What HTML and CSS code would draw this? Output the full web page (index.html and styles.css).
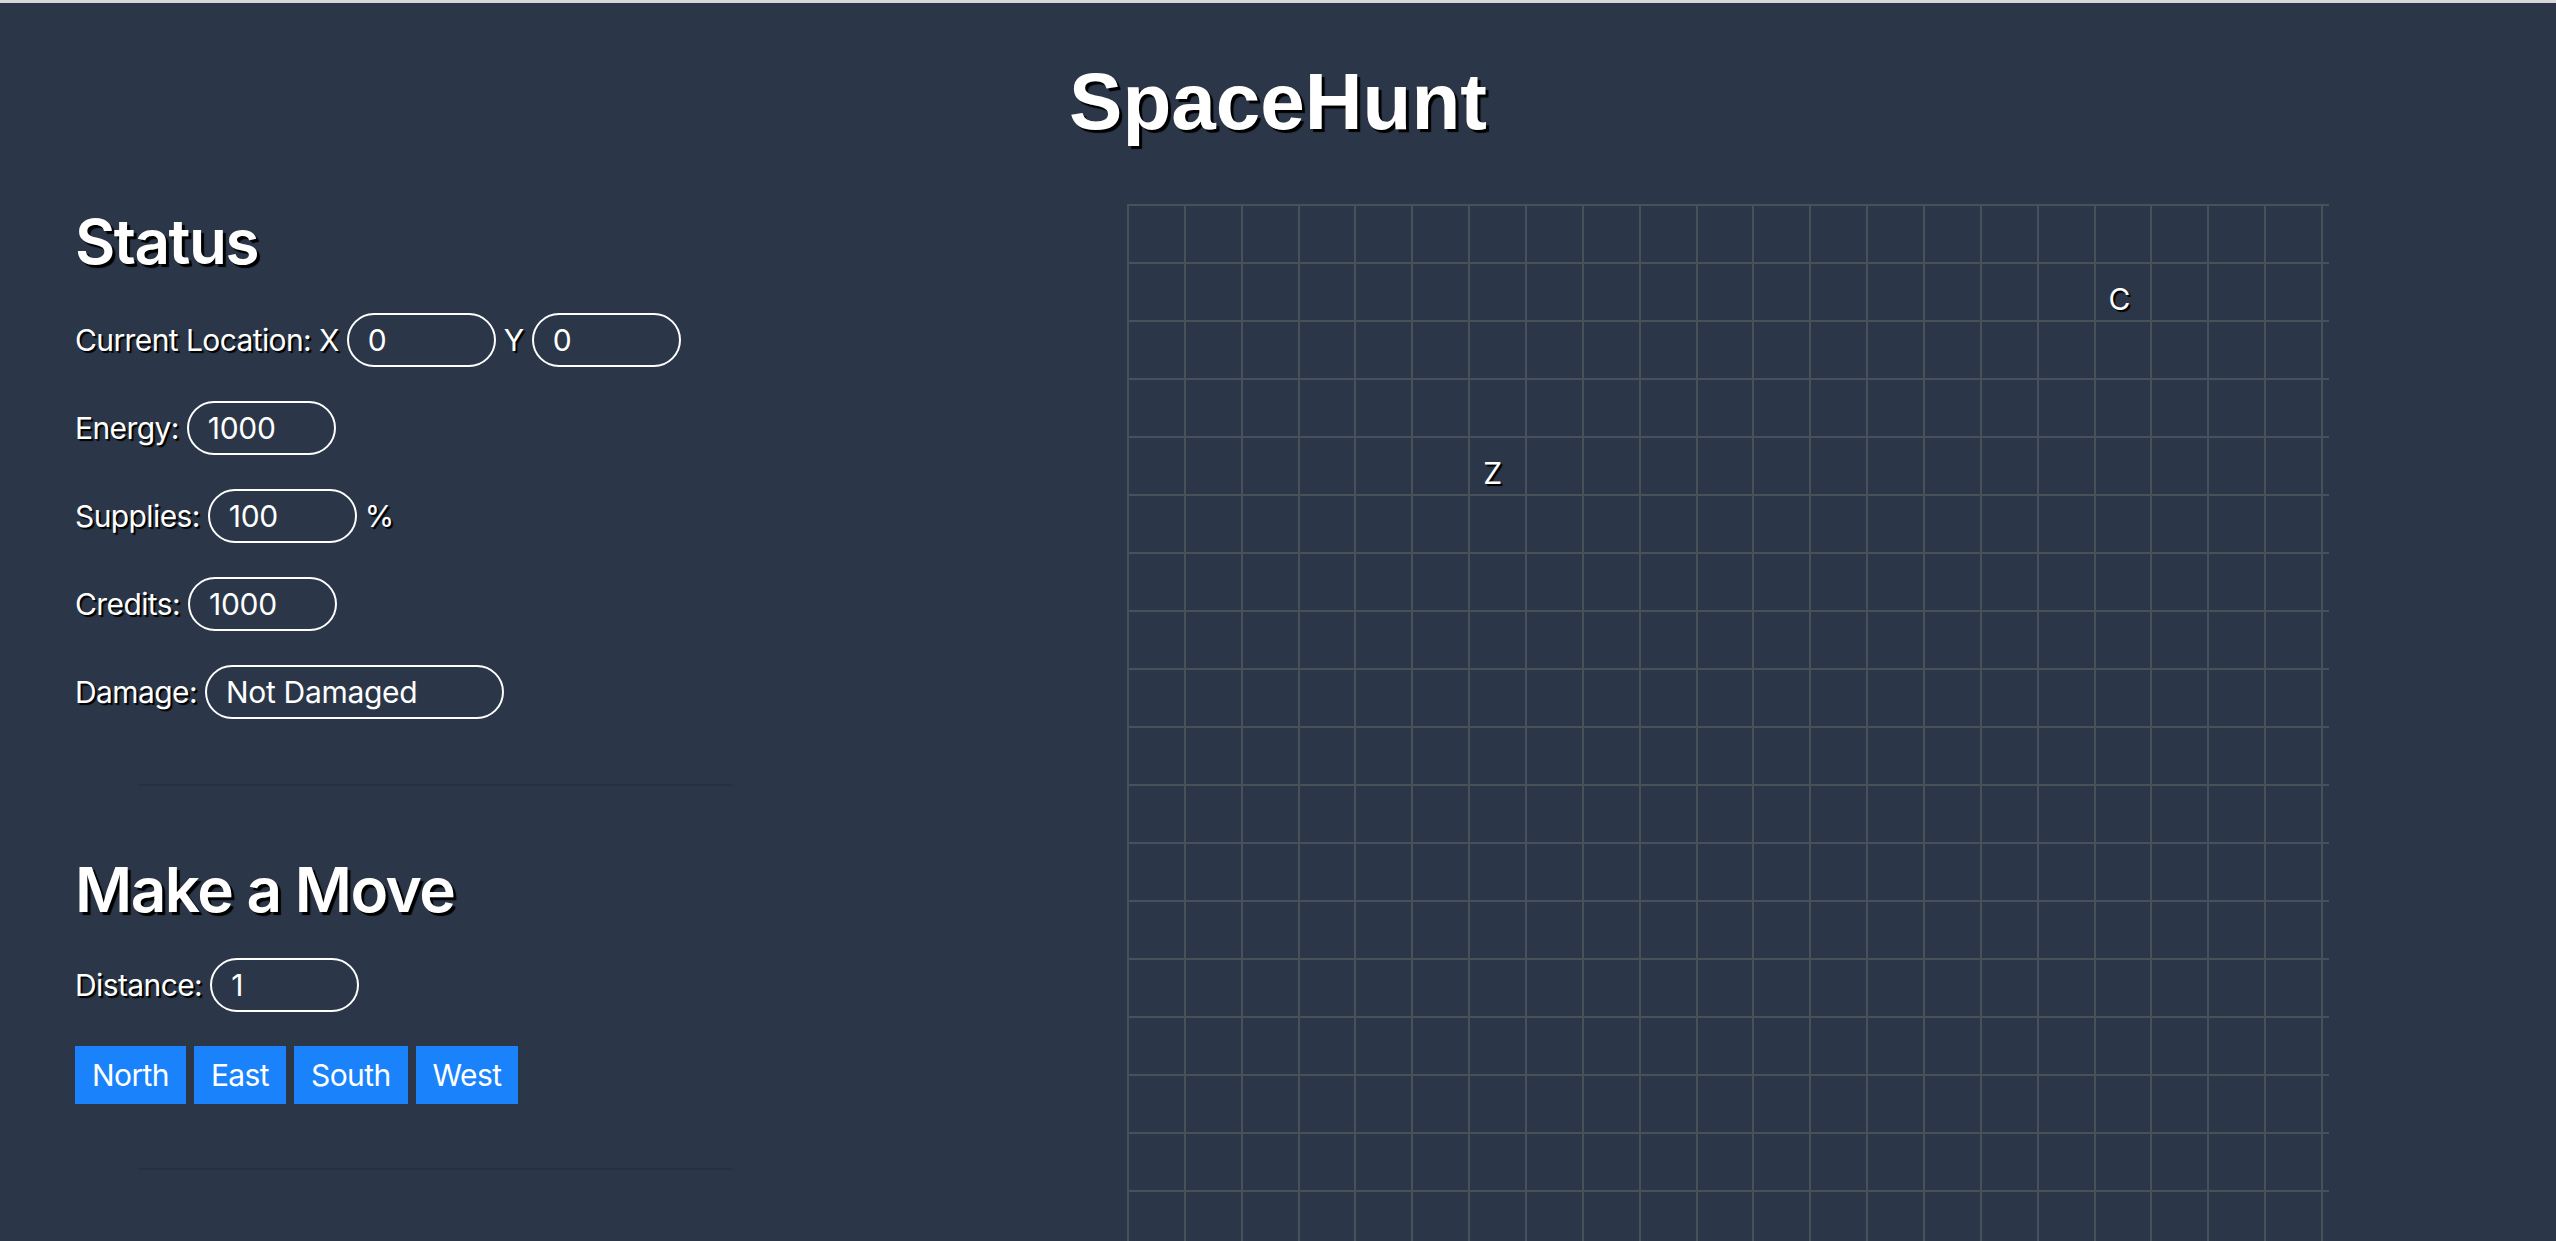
FILE: index.html
```html
<!DOCTYPE html>
<html lang="en">
<head>
<meta charset="utf-8">
<title>SpaceHunt</title>
<link rel="stylesheet" href="styles.css">
</head>
<body>
<div class="app">
  <div class="topbar"></div>
  <header class="header">
    <h1 class="title">SpaceHunt</h1>
  </header>
  <main class="main">
    <section class="panel">
      <h2 class="heading heading--status">Status</h2>
      <div class="field">
        <span class="label">Current Location: X</span>
        <input class="pill" type="text" value="0">
        <span class="label">Y</span>
        <input class="pill" type="text" value="0">
      </div>
      <div class="field">
        <span class="label">Energy:</span>
        <input class="pill" type="text" value="1000">
      </div>
      <div class="field">
        <span class="label">Supplies:</span>
        <input class="pill" type="text" value="100">
        <span class="label">%</span>
      </div>
      <div class="field">
        <span class="label">Credits:</span>
        <input class="pill" type="text" value="1000">
      </div>
      <div class="field field--last">
        <span class="label">Damage:</span>
        <input class="pill pill--wide" type="text" value="Not Damaged">
      </div>
      <hr class="divider">
      <h2 class="heading heading--move">Make a Move</h2>
      <div class="field">
        <span class="label">Distance:</span>
        <input class="pill" type="text" value="1">
      </div>
      <div class="buttons">
        <button class="btn">North</button>
        <button class="btn">East</button>
        <button class="btn">South</button>
        <button class="btn">West</button>
      </div>
      <hr class="divider">
    </section>
    <section class="map" id="map"></section>
  </main>
</div>
<script src="app.js"></script>
</body>
</html>
```
FILE: styles.css
```css
html, body {
  margin: 0;
  padding: 0;
  height: 100%;
}
body {
  background: #2b3748;
  color: #fff;
  font-family: Inter, "Noto Sans", sans-serif;
  overflow: hidden;
}
.app {
  height: 100vh;
  overflow: hidden;
}
.topbar {
  height: 3px;
  background: #d8d8db;
}
.header {
  padding-top: 59px;
}
.title {
  margin: 0;
  text-align: center;
  font-family: "Liberation Sans", Arial, sans-serif;
  font-weight: 700;
  font-size: 80px;
  line-height: 80px;
  color: #fff;
  text-shadow: 3px 3px 1px #000;
}
.main {
  display: flex;
  align-items: flex-start;
  margin-top: 62px;
  padding-left: 75px;
}
.panel {
  flex: none;
  width: 1052px;
}
.heading {
  margin: 0;
  font-size: 62px;
  line-height: 62px;
  font-weight: 600;
  letter-spacing: -1.5px;
  color: #fff;
  text-shadow: 3px 3px 1px #000;
}
.heading--status {
  margin-top: 7px;
  margin-bottom: 40px;
}
.heading--move {
  margin-top: 73px;
  margin-bottom: 37px;
}
.field {
  display: flex;
  align-items: center;
  gap: 8px;
  height: 54px;
  margin-bottom: 34px;
}
.field--last {
  margin-bottom: 65px;
}
.label {
  font-size: 30px;
  color: #fff;
  text-shadow: 2px 2px 1px #000;
  letter-spacing: -0.6px;
}
.pill {
  box-sizing: border-box;
  width: 149px;
  height: 54px;
  padding: 0 19px;
  border: 2px solid #fff;
  border-radius: 27px;
  background: transparent;
  color: #fff;
  font-family: Inter, "Noto Sans", sans-serif;
  font-size: 30px;
  letter-spacing: -0.3px;
  outline: none;
}
.pill--wide {
  width: 299px;
}
.divider {
  margin: 0 0 0 64px;
  width: 593px;
  height: 2px;
  border: none;
  background: #253042;
}
.buttons {
  display: flex;
  gap: 8px;
  margin-bottom: 64px;
}
.btn {
  height: 58px;
  padding: 0 17px;
  border: none;
  border-radius: 0;
  background: #1a82fb;
  color: #fff;
  font-family: Inter, "Noto Sans", sans-serif;
  font-size: 30px;
  letter-spacing: -0.6px;
  cursor: pointer;
}
.map {
  flex: none;
  width: 1202px;
}
.row {
  display: flex;
  box-sizing: border-box;
  height: 58px;
  padding-right: 6px;
  border-top: 2px solid #48505a;
}
.cell {
  flex: 1 1 0;
  min-width: 0;
  border-left: 2px solid #48505a;
  font-size: 30px;
  line-height: 36px;
  color: #fff;
  text-shadow: 2px 2px 1px #000;
  white-space: nowrap;
}
.cell:last-child {
  border-right: 2px solid #48505a;
}
.cell--marked {
  padding-top: 17px;
  text-indent: 13px;
}
```
FILE: app.js
```js
(function () {
  var size = 21;
  var marks = { "4,6": "Z", "1,17": "C" };
  var map = document.getElementById("map");
  for (var r = 0; r < size; r++) {
    var row = document.createElement("div");
    row.className = "row";
    for (var c = 0; c < size; c++) {
      var cell = document.createElement("div");
      cell.className = "cell";
      var key = r + "," + c;
      if (marks[key]) {
        cell.className += " cell--marked";
        cell.textContent = marks[key];
      }
      row.appendChild(cell);
    }
    map.appendChild(row);
  }
})();
```
